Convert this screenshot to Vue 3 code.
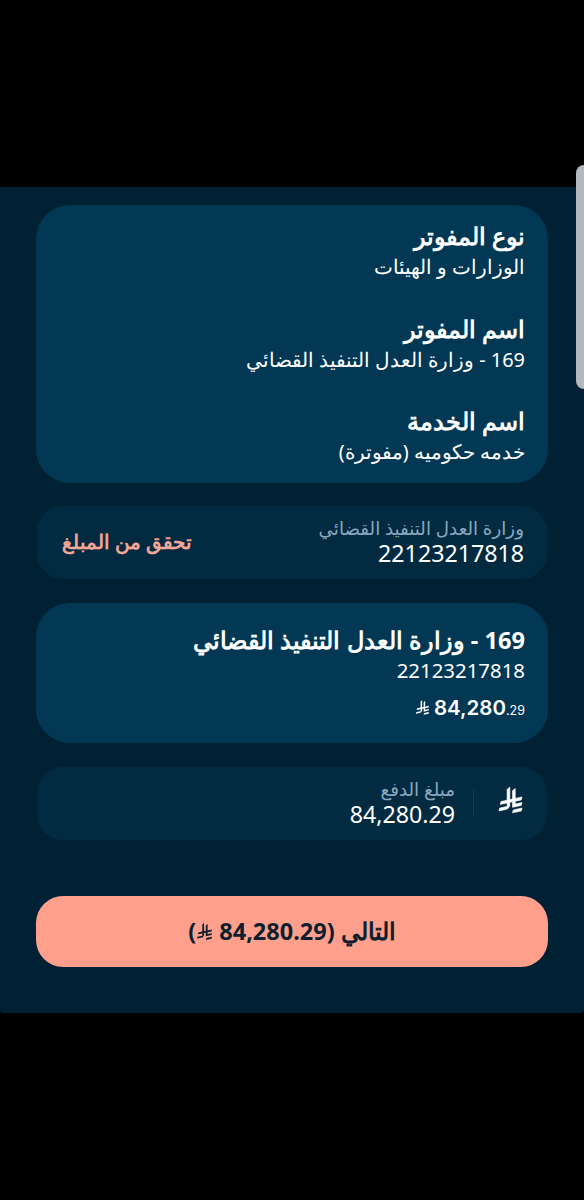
<template>
  <div class="viewer">
    <main class="screen" dir="rtl">
      <section class="card details">
        <div v-for="item in details" :key="item.label" class="field">
          <h3>{{ item.label }}</h3>
          <p>{{ item.value }}</p>
        </div>
      </section>

      <section class="input-row account">
        <div class="input-text">
          <label>وزارة العدل التنفيذ القضائي</label>
          <span class="number">{{ account }}</span>
        </div>
        <button class="check-btn">تحقق من المبلغ</button>
      </section>

      <section class="card bill">
        <h3>169 - وزارة العدل التنفيذ القضائي</h3>
        <p class="bill-number">{{ account }}</p>
        <div class="bill-amount" dir="ltr">
          <svg class="riyal" viewBox="0 0 1124 1256"><path :d="riyalPath" /></svg>
          <span class="whole">84,280</span><span class="cents">.29</span>
        </div>
      </section>

      <section class="input-row payment">
        <svg class="riyal" viewBox="0 0 1124 1256"><path :d="riyalPath" /></svg>
        <span class="divider"></span>
        <div class="input-text">
          <label>مبلغ الدفع</label>
          <span class="number">{{ amount }}</span>
        </div>
      </section>

      <button class="next-btn">
        <span>التالي ({{ amount }}</span>
        <svg class="riyal" viewBox="0 0 1124 1256"><path :d="riyalPath" /></svg>
        <span>)</span>
      </button>
    </main>
    <div class="edge-handle"></div>
  </div>
</template>

<script setup>
import { ref } from 'vue';

const account = ref('22123217818');
const amount = ref('84,280.29');

const details = ref([
  { label: 'نوع المفوتر', value: 'الوزارات و الهيئات' },
  { label: 'اسم المفوتر', value: '169 - وزارة العدل التنفيذ القضائي' },
  { label: 'اسم الخدمة', value: 'خدمه حكوميه (مفوترة)' }
]);

const riyalPath = 'M699.6 1113c-20 44.5-33.3 92.8-38.4 143.4l424.5-90.2c20-44.5 33.3-92.8 38.4-143.4zM1085.7 895.8c20-44.5 33.3-92.8 38.4-143.4l-330.7 70.3V687.6l292.3-62.1c20-44.5 33.3-92.8 38.4-143.4l-330.7 70.3V66.1c-50.6 28.5-95.6 66.3-132.2 111v403.4l-132.3 28.1V0c-50.6 28.4-95.6 66.3-132.2 111v525.7L101 699.6c-20 44.4-33.3 92.7-38.4 143.3l334.3-71v170.2L38.4 1018.3C18.4 1062.8 5 1111 0 1161.7l375-79.7c30.6-6.4 56.8-24.4 73.9-49.3l68.8-102c7.1-10.5 11.3-23.2 11.3-36.9V743.8l132.2-28.1v270.4z';
</script>

<style>
body { margin: 0; background: #000; }
</style>

<style scoped>
.viewer {
  position: relative; box-sizing: border-box; height: 1200px; padding-top: 187px; overflow: hidden;
  background: #000; color: #fff; font-family: "Noto Sans", sans-serif;
}
.screen {
  box-sizing: border-box; height: 826px; padding: 18px 36px 0; background: #002133;
  border-radius: 0 0 4px 4px; display: flex; flex-direction: column;
}
h3, p { margin: 0; white-space: nowrap; }
h3 { font-size: 23.6px; line-height: 30px; font-weight: 700; }
p { font-size: 20px; line-height: 32px; }
button { border: none; font-family: inherit; cursor: pointer; }
.riyal { fill: currentColor; flex: none; overflow: visible; }

.card { box-sizing: border-box; background: #033855; border-radius: 34px; padding: 0 23px; }
.details { height: 277.5px; padding-top: 16px; display: flex; flex-direction: column; gap: 32.5px; }
.details p { font-size: 19.9px; }
.field { height: 60px; }

.input-row {
  box-sizing: border-box; margin: 0 1px; background: #022b41; border-radius: 26px;
  display: flex; align-items: center; padding: 0 23px;
}
.input-text { display: flex; flex-direction: column; white-space: nowrap; padding-bottom: 4px; }
.input-text label { font-family: "Noto Sans", "DejaVu Sans", sans-serif; font-size: 18.3px; line-height: 24px; color: #89a8c0; }
.number { font-size: 23.2px; line-height: 26px; }
.account { height: 73px; margin-top: 23.5px; justify-content: space-between; }
.check-btn { padding: 0 2px 3px; background: none; color: #f5a498; font-size: 20px; font-weight: 700; white-space: nowrap; }

.bill { height: 140px; margin-top: 24px; padding-top: 22px; }
.bill-number { font-size: 20.4px; line-height: 30px; }
.bill-amount { display: flex; justify-content: flex-end; align-items: baseline; margin-top: 9px; font-family: Inter, sans-serif; line-height: 28px; }
.bill-amount .riyal { width: 13px; height: 15px; margin-right: 5px; }
.whole { font-size: 20.5px; font-weight: 600; }
.cents { font-size: 12.5px; }

.payment { height: 73px; margin-top: 24px; }
.payment .riyal { width: 23px; height: 26px; margin: 0 2px 7px 0; stroke: currentColor; stroke-width: 30; }
.divider { width: 1px; height: 27px; margin: 0 25px 0 18px; background: #17394e; }

.next-btn {
  height: 71px; margin-top: 56px; padding: 0 0 2px; background: #ff9f8c; border-radius: 27px; color: #0b1f2e;
  display: flex; align-items: center; justify-content: center; font-size: 23.5px; font-weight: 700; white-space: nowrap;
}
.next-btn .riyal { width: 15px; height: 17px; margin: 2px 7px 0 1px; }

.edge-handle {
  position: absolute; right: -8px; top: 165px; width: 16px; height: 224px;
  background: #b3b8bd; border-radius: 8px;
}
</style>
